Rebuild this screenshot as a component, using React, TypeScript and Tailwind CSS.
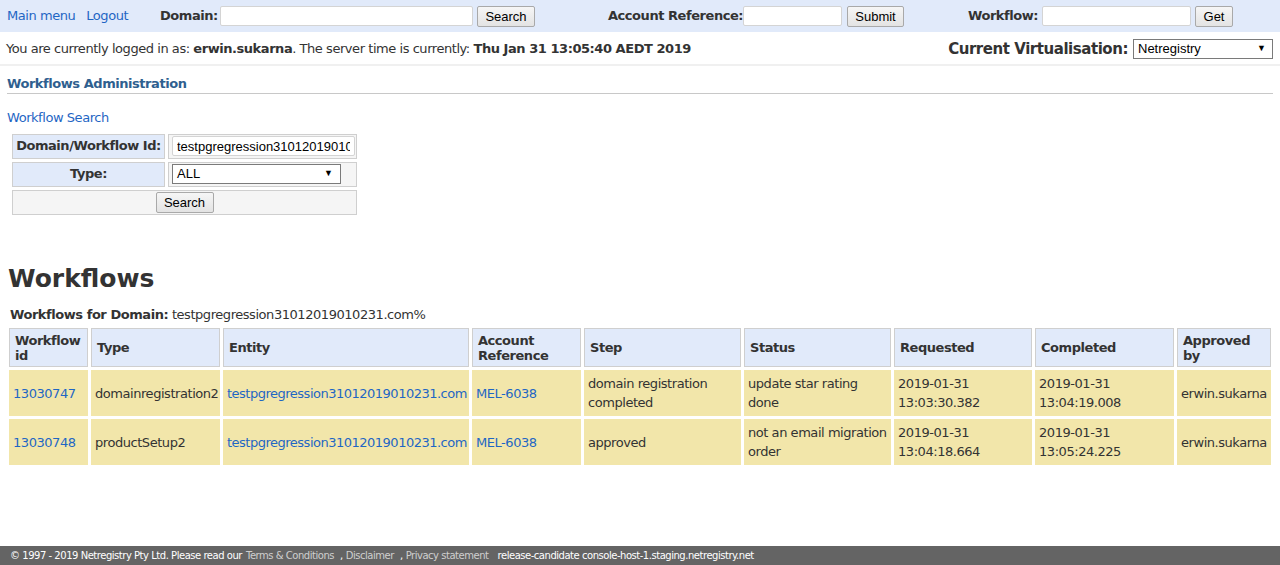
import React from 'react';

const rows = [
  {
    id: '13030747',
    type: 'domainregistration2',
    entity: 'testpgregression31012019010231.com',
    account: 'MEL-6038',
    step: 'domain registration completed',
    status: 'update star rating done',
    requested: ['2019-01-31', '13:03:30.382'],
    completed: ['2019-01-31', '13:04:19.008'],
    approvedBy: 'erwin.sukarna',
  },
  {
    id: '13030748',
    type: 'productSetup2',
    entity: 'testpgregression31012019010231.com',
    account: 'MEL-6038',
    step: 'approved',
    status: 'not an email migration order',
    requested: ['2019-01-31', '13:04:18.664'],
    completed: ['2019-01-31', '13:05:24.225'],
    approvedBy: 'erwin.sukarna',
  },
];

const headers = [
  { label: 'Workflow id', w: 'w-[79px]' },
  { label: 'Type', w: 'w-[129px]' },
  { label: 'Entity', w: 'w-[246px]' },
  { label: 'Account Reference', w: 'w-[109px]' },
  { label: 'Step', w: 'w-[157px]' },
  { label: 'Status', w: 'w-[147px]' },
  { label: 'Requested', w: 'w-[138px]' },
  { label: 'Completed', w: 'w-[139px]' },
  { label: 'Approved by', w: 'w-[94px]' },
];

const btn =
  "h-[21px] rounded-[2px] border border-[#a9a9a9] bg-gradient-to-b from-[#f6f6f6] to-[#e3e3e3] px-[6px] font-['Liberation_Sans',Arial,sans-serif] text-[13px] leading-none text-black tracking-normal";
const input =
  "h-[20px] rounded-[2px] border border-[#d4d4d4] bg-white px-[4px] font-['Liberation_Sans',Arial,sans-serif] text-[13px] text-black outline-none tracking-normal";

const App: React.FC = () => {
  return (
    <div className="min-h-[565px] flex flex-col bg-white font-['DejaVu_Sans',Verdana,sans-serif] text-[12px] text-[#333] tracking-[-0.45px]">
      {/* top bar */}
      <div className="h-[32px] bg-[#e1eafa] flex items-center pl-[7px] whitespace-nowrap">
        <div className="w-[153px] flex gap-[11px] text-[#1f66c4] text-[13px]">
          <a>Main menu</a>
          <a>Logout</a>
        </div>
        <span className="font-bold text-[13px] w-[60px]">Domain:</span>
        <input className={`${input} w-[253px]`} defaultValue="" />
        <button className={`${btn} ml-[4px] w-[58px]`}>Search</button>
        <span className="font-bold text-[13px] ml-[73px] w-[135px]">Account Reference:</span>
        <input className={`${input} w-[99px]`} defaultValue="" />
        <button className={`${btn} ml-[5px] w-[57px]`}>Submit</button>
        <span className="font-bold text-[13px] ml-[64px] w-[74px]">Workflow:</span>
        <input className={`${input} w-[149px]`} defaultValue="" />
        <button className={`${btn} ml-[4px] w-[38px]`}>Get</button>
      </div>

      {/* status line */}
      <div className="h-[34px] flex items-center justify-between pl-[6px] pr-[7px] pt-[2px] border-b-2 border-[#f0f0f0]">
        <div className="text-[13px]">
          You are currently logged in as: <b>erwin.sukarna</b>. The server time is currently:{' '}
          <b>Thu Jan 31 13:05:40 AEDT 2019</b>
        </div>
        <div className="flex items-center gap-[5px]">
          <span className="font-bold text-[15px]">Current Virtualisation:</span>
          <div className="w-[140px] h-[20px] border border-[#7a7a7a] bg-white flex items-center justify-between pl-[4px] pr-[6px] font-['Liberation_Sans',Arial,sans-serif] text-[13px] text-black tracking-normal">
            <span>Netregistry</span>
            <span className="text-[9px]">▼</span>
          </div>
        </div>
      </div>

      {/* admin heading */}
      <div className="px-[7px] pt-[10px]">
        <div className="font-bold text-[13px] leading-[16px] text-[#2f5f8f] pb-[1px] border-b border-[#c8c8c8]">
          Workflows Administration
        </div>
        <a className="block mt-[14px] text-[13px] text-[#1f66c4]">Workflow Search</a>
      </div>

      {/* search form */}
      <table className="ml-[9px] mt-[3px] w-[351px] border-separate border-spacing-[3px] text-[13px]">
        <tbody>
          <tr className="h-[25px]">
            <td className="w-[155px] border border-[#cfcfcf] bg-[#e1eafa] text-center font-bold">Domain/Workflow Id:</td>
            <td className="border border-[#cfcfcf] bg-[#f5f5f5] pl-[3px] pr-[1px]">
              <input className={`${input} w-[183px]`} defaultValue="testpgregression31012019010231.com%" />
            </td>
          </tr>
          <tr className="h-[25px]">
            <td className="border border-[#cfcfcf] bg-[#e1eafa] text-center font-bold">Type:</td>
            <td className="border border-[#cfcfcf] bg-[#f5f5f5] pl-[3px]">
              <div className="w-[169px] h-[20px] border border-[#7a7a7a] bg-white flex items-center justify-between pl-[4px] pr-[7px] font-['Liberation_Sans',Arial,sans-serif] text-[13px] text-black tracking-normal">
                <span>ALL</span>
                <span className="text-[9px]">▼</span>
              </div>
            </td>
          </tr>
          <tr className="h-[25px]">
            <td colSpan={2} className="border border-[#cfcfcf] bg-[#f5f5f5] text-center">
              <button className={`${btn} w-[58px]`}>Search</button>
            </td>
          </tr>
        </tbody>
      </table>

      {/* workflows */}
      <h1 className="ml-[8px] mt-[46px] font-bold text-[25px] leading-[30px] tracking-normal">Workflows</h1>
      <div className="ml-[10px] mt-[11px] text-[13px]">
        <b>Workflows for Domain:</b> testpgregression31012019010231.com%
      </div>
      <table className="ml-[6px] mt-[1px] w-[1268px] table-fixed border-separate border-spacing-[3px] text-[13px]">
        <thead>
          <tr className="h-[39px]">
            {headers.map(h => (
              <th
                key={h.label}
                className={`${h.w} border border-[#cfcfcf] bg-[#e1eafa] px-[5px] text-left align-middle font-bold leading-[15px]`}
              >
                {h.label}
              </th>
            ))}
          </tr>
        </thead>
        <tbody>
          {rows.map(r => (
            <tr key={r.id} className="h-[46px] bg-[#f2e6aa]">
              <td className="px-[4px] text-[#1f66c4] leading-[19px]">{r.id}</td>
              <td className="px-[4px] leading-[19px]">{r.type}</td>
              <td className="px-[4px] text-[#1f66c4] leading-[19px] whitespace-nowrap tracking-[-0.5px]">{r.entity}</td>
              <td className="px-[4px] text-[#1f66c4] leading-[19px]">{r.account}</td>
              <td className="px-[4px] leading-[19px]">{r.step}</td>
              <td className="px-[4px] leading-[19px]">{r.status}</td>
              <td className="px-[4px] leading-[19px]">
                {r.requested[0]}
                <br />
                {r.requested[1]}
              </td>
              <td className="px-[4px] leading-[19px]">
                {r.completed[0]}
                <br />
                {r.completed[1]}
              </td>
              <td className="px-[4px] leading-[19px]">{r.approvedBy}</td>
            </tr>
          ))}
        </tbody>
      </table>

      <div className="flex-1" />

      {/* footer */}
      <div className="h-[19px] bg-[#646464] flex items-center pl-[10px] text-[10px] text-white tracking-[-0.47px] whitespace-nowrap">
        <span>© 1997 - 2019 Netregistry Pty Ltd. Please read our</span>
        <a className="ml-[4px] text-[#cfcfcf]">Terms &amp; Conditions</a>
        <span className="ml-[6px]">,</span>
        <a className="ml-[3px] text-[#cfcfcf]">Disclaimer</a>
        <span className="ml-[6px]">,</span>
        <a className="ml-[3px] text-[#cfcfcf]">Privacy statement</a>
        <span className="ml-[9px]">release-candidate console-host-1.staging.netregistry.net</span>
      </div>
    </div>
  );
};

export default App;
